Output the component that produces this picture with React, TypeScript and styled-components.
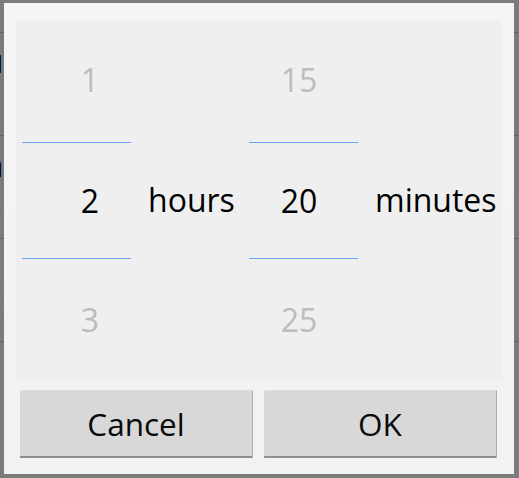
import React from "react";
import styled, { createGlobalStyle } from "styled-components";

const Global = createGlobalStyle`
  html, body { margin: 0; padding: 0; }
  body {
    width: 519px;
    height: 478px;
    overflow: hidden;
    background: #7b7b7b;
    font-family: "Open Sans", "DejaVu Sans", sans-serif;
  }
`;

const Screen = styled.div`
  position: relative;
  width: 519px;
  height: 478px;
  overflow: hidden;
  background: #7b7b7b;
`;

const Behind = styled.div`
  display: flex;
  flex-direction: column;
  padding-top: 32px;
`;

const BehindRow = styled.div<{ $h: number; $pt: number }>`
  height: ${(p) => p.$h}px;
  border-top: 1px solid #626262;
  box-sizing: border-box;
  color: #0c0c0c;
  font-size: 32px;
  line-height: 35px;
  padding-top: ${(p) => p.$pt}px;
  white-space: nowrap;
  display: flex;
  flex-direction: column;
`;

const BehindText = styled.span<{ $shift: number }>`
  margin-left: ${(p) => -p.$shift}px;
`;

const Dialog = styled.div`
  position: absolute;
  left: 4px;
  top: 3px;
  width: 510px;
  height: 471px;
  box-sizing: border-box;
  background: linear-gradient(180deg, #f5f5f5 0%, #f2f2f2 100%);
  padding: 17px 12px 16px 12px;
  display: flex;
  flex-direction: column;
`;

const Panel = styled.div`
  background: #efefef;
  height: 360px;
  display: flex;
  align-items: stretch;
  padding-left: 6px;
`;

const Column = styled.div<{ $ml: number }>`
  width: 109px;
  flex: none;
  margin-left: ${(p) => p.$ml}px;
  display: flex;
  flex-direction: column;
`;

const Cell = styled.div<{ $h: number; $dim?: boolean; $line?: boolean; $dx: number; $dy?: number }>`
  height: ${(p) => p.$h}px;
  box-sizing: border-box;
  display: flex;
  align-items: center;
  justify-content: center;
  font-size: 32px;
  color: ${(p) => (p.$dim ? "#bcbcbc" : "#000")};
  border-top: ${(p) => (p.$line ? "1px solid #6aa2ff" : "none")};
  border-bottom: ${(p) => (p.$line ? "1px solid #6aa2ff" : "none")};
  padding-left: ${(p) => (p.$dx > 0 ? p.$dx * 2 : 0)}px;
  padding-right: ${(p) => (p.$dx < 0 ? -p.$dx * 2 : 0)}px;
  padding-bottom: ${(p) => (p.$dy ? p.$dy * 2 : 0)}px;
`;

const Label = styled.div<{ $w: number; $ml: number }>`
  width: ${(p) => p.$w}px;
  flex: none;
  margin-left: ${(p) => p.$ml}px;
  display: flex;
  align-items: center;
  font-size: 32px;
  color: #000;
  white-space: nowrap;
  padding-bottom: 2px;
`;

const Buttons = styled.div`
  margin-top: 10px;
  display: flex;
  gap: 11px;
  padding: 0 5px 0 4px;
`;

const Button = styled.button`
  flex: 1;
  height: 68px;
  background: #d8d8d8;
  border: none;
  border-top: 1px solid #e0e0e0;
  border-right: 1px solid #ababab;
  border-bottom: 2px solid #8e8e8e;
  border-radius: 1px;
  font-family: "Open Sans", "DejaVu Sans", sans-serif;
  font-size: 31.5px;
  color: #0a0a0a;
  padding: 0;
`;

function Picker({ values, dx, ml }: { values: [string, string, string]; dx: number; ml: number }) {
  return (
    <Column $ml={ml}>
      <Cell $h={122} $dim $dx={dx} $dy={1.5}>{values[0]}</Cell>
      <Cell $h={117} $line $dx={dx}>{values[1]}</Cell>
      <Cell $h={121} $dim $dx={dx}>{values[2]}</Cell>
    </Column>
  );
}

export default function App() {
  return (
    <Screen>
      <Global />
      <Behind>
        <BehindRow $h={103} $pt={10}>
          <BehindText $shift={16}>u</BehindText>
        </BehindRow>
        <BehindRow $h={103} $pt={11}>
          <BehindText $shift={16}>n</BehindText>
          <BehindText $shift={6}>,</BehindText>
        </BehindRow>
        <BehindRow $h={103} $pt={10} />
        <BehindRow $h={103} $pt={10} />
      </Behind>
      <Dialog>
        <Panel>
          <Picker values={["1", "2", "3"]} dx={13.5} ml={0} />
          <Label $w={85} $ml={17}>hours</Label>
          <Picker values={["15", "20", "25"]} dx={-4.5} ml={16} />
          <Label $w={125} $ml={17}>minutes</Label>
        </Panel>
        <Buttons>
          <Button>Cancel</Button>
          <Button>OK</Button>
        </Buttons>
      </Dialog>
    </Screen>
  );
}
